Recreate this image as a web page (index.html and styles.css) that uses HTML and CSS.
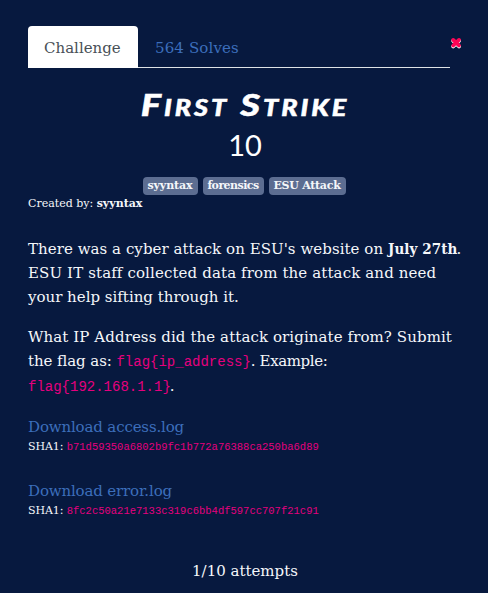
FILE: index.html
```html
<!DOCTYPE html>
<html lang="en">
<head>
<meta charset="utf-8">
<title>First Strike</title>
<link rel="stylesheet" href="styles.css">
</head>
<body>
<main class="modal">
  <header class="top">
    <nav class="tabs">
      <a class="tab active">Challenge</a>
      <a class="tab solves">564 Solves</a>
    </nav>
    <svg class="close" viewBox="0 0 12 12" role="img" aria-label="Close">
      <path class="close-shadow" d="M3.2 3.8l5.8 5.6M9 3.8l-5.8 5.6"/>
      <path class="close-mark" d="M3.2 2.9l5.8 5.6M9 2.9l-5.8 5.6"/>
    </svg>
  </header>
  <h2 class="title">First Strike</h2>
  <div class="value">10</div>
  <div class="tags"><span class="tag t1">syyntax</span><span class="tag t2">forensics</span><span class="tag t3">ESU Attack</span></div>
  <div class="author">Created by: <b>syyntax</b></div>
  <p class="intro"><span class="l1">There was a cyber attack on ESU's website on </span><b class="date">July 27th</b><span class="dot">.</span><br><span class="l2">ESU IT staff collected data from the attack and need</span><br>your help sifting through it.</p>
  <p class="question"><span class="l3">What IP Address did the attack originate from? Submit</span><br><span class="l4">the flag as: </span><code>flag{ip_address}</code><span class="example">. Example:</span><br><span class="last"><code>flag{192.168.1.1}</code><span class="dot">.</span></span></p>
  <div class="file">
    <a class="link">Download access.log</a>
    <div class="hash">SHA1: <code>b71d59350a6802b9fc1b772a76388ca250ba6d89</code></div>
  </div>
  <div class="file">
    <a class="link">Download error.log</a>
    <div class="hash">SHA1: <code>8fc2c50a21e7133c319c6bb4df597cc707f21c91</code></div>
  </div>
  <div class="attempts">1/10 attempts</div>
</main>
</body>
</html>
```
FILE: styles.css
```css
* { box-sizing: border-box; }
body {
  margin: 0;
  background: #07193f;
  color: #f5f7fa;
  font: 15px/24px "DejaVu Serif", serif;
}
.modal { height: 593px; padding: 26px 26px 0 28px; overflow: hidden; white-space: nowrap; }
.top { display: flex; height: 42px; }
.tabs { display: flex; width: 422px; border-bottom: 1px solid #dee2e6; }
.tab { height: 42px; padding: 10px 17px; color: #3c6ebb; }
.tab.active {
  width: 110px;
  padding-left: 16px;
  background: #fff;
  color: #495057;
  border-radius: 4px 4px 0 0;
}
.solves { letter-spacing: .14px; }
.close { width: 12px; height: 12px; margin: 11px 0 0; flex: none; }
.close path { fill: none; stroke-width: 3.8; stroke-linecap: round; }
.close .close-shadow { stroke: #fff; }
.close .close-mark { stroke: #ff0555; }
.title {
  margin: 17px 0 0;
  height: 38px;
  text-align: center;
  color: #fff;
  font: italic 900 31px/38px Lato, sans-serif;
  font-variant-caps: small-caps;
  letter-spacing: 2.4px;
  transform: scaleX(1.23);
  -webkit-text-stroke: .5px #fff;
}
.value { height: 44px; text-align: center; color: #fff; font: 29px/44px Lato, sans-serif; }
.tags { display: flex; justify-content: center; gap: 5px; margin: 10px 2px 0 0; font: bold 11px/18px "DejaVu Serif", serif; }
.tag { height: 18px; border-radius: 4px; background: #5c6d91; text-align: center; }
.t1 { width: 55px; letter-spacing: -.1px; }
.t2 { width: 61px; letter-spacing: -.55px; }
.t3 { width: 77px; letter-spacing: -.27px; }
.author { height: 18px; font: 11px/18px "DejaVu Serif", serif; }
p { margin: 0; }
.intro { margin-top: 24px; }
.l1 { letter-spacing: .05px; }
.l2 { letter-spacing: .12px; }
.l3 { letter-spacing: .09px; }
.l4 { letter-spacing: -.08px; }
.date { font-family: "DejaVu Serif Condensed", "DejaVu Serif", serif; letter-spacing: .1px; }
.dot { letter-spacing: -1px; margin-left: -1px; }
.question { margin-top: 16px; height: 74px; }
.example { letter-spacing: -.4px; }
.last { display: inline-block; padding-top: 1px; }
code { font: 14px "Liberation Mono", monospace; color: #e5007e; }
.file { height: 48px; margin-top: 16px; }
.link { display: block; height: 24px; color: #3c6ebb; letter-spacing: -.15px; }
.hash { height: 16px; font: 11px/15px "DejaVu Serif", serif; letter-spacing: -.1px; }
.hash code { font-size: 10.5px; letter-spacing: 0; }
.attempts { margin-top: 32px; text-align: center; }
```
